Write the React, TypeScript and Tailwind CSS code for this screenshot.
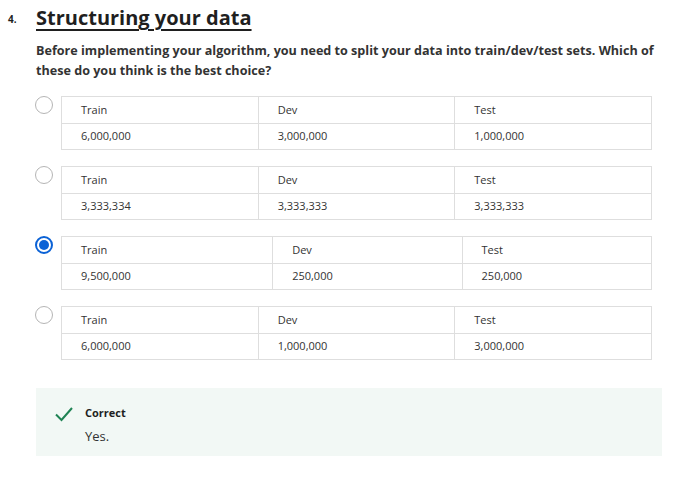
type Option = { train: string; dev: string; test: string; selected?: boolean };

const options: Option[] = [
  { train: '6,000,000', dev: '3,000,000', test: '1,000,000' },
  { train: '3,333,334', dev: '3,333,333', test: '3,333,333' },
  { train: '9,500,000', dev: '250,000', test: '250,000', selected: true },
  { train: '6,000,000', dev: '1,000,000', test: '3,000,000' },
];

function Radio({ selected }: { selected?: boolean }) {
  if (selected) {
    return (
      <div className="w-[18px] h-[18px] rounded-full border-2 border-[#0b62d6] flex items-center justify-center">
        <div className="w-[10px] h-[10px] rounded-full bg-[#0b62d6]" />
      </div>
    );
  }
  return <div className="w-[18px] h-[18px] rounded-full border border-[#b5b5b5] bg-white" />;
}

function SplitTable({ o }: { o: Option }) {
  const cell = 'border border-[#dedede] px-[19px] py-0 text-left font-normal align-middle';
  return (
    <table className="w-full border-collapse text-[11px] text-[#333]">
      <tbody>
        <tr>
          <td className={`${cell} h-[27px]`}>Train</td>
          <td className={`${cell} h-[27px]`}>Dev</td>
          <td className={`${cell} h-[27px]`}>Test</td>
        </tr>
        <tr>
          <td className={`${cell} h-[26px]`}>{o.train}</td>
          <td className={`${cell} h-[26px]`}>{o.dev}</td>
          <td className={`${cell} h-[26px]`}>{o.test}</td>
        </tr>
      </tbody>
    </table>
  );
}

export default function App() {
  return (
    <div
      className="w-[690px] h-[482px] bg-white pl-2 pr-[28px] pt-1"
      style={{ fontFamily: '"Open Sans", "Noto Sans", sans-serif' }}>
      <div className="flex">
        <div className="w-[28px] shrink-0 text-[10px] font-bold text-[#1f1f1f] leading-[28px] pt-[1px]">4.</div>
        <div className="flex-1">
          <h2 className="text-[20px] leading-[28px] font-bold text-[#1f1f1f] underline underline-offset-[4px] decoration-[1.5px]">
            Structuring your data
          </h2>
          <p className="mt-[9px] text-[12.6px] leading-[20px] font-bold text-[#333]">
            Before implementing your algorithm, you need to split your data into train/dev/test sets. Which of these
            do you think is the best choice?
          </p>

          <div className="mt-[15px] flex flex-col gap-[16px]">
            {options.map((o, i) => (
              <div key={i} className="flex items-start">
                <div className="w-[26px] shrink-0 -ml-[1px]">
                  <Radio selected={o.selected} />
                </div>
                <div className="flex-1 mr-[10px]">
                  <SplitTable o={o} />
                </div>
              </div>
            ))}
          </div>

          <div className="mt-[28px] bg-[#f2f8f5] h-[68px] pl-[19px] pt-[17px] flex gap-[12px]">
            <svg width="18" height="16" viewBox="0 0 18 16" className="shrink-0 mt-[1px]">
              <polyline points="1,8.5 6.5,14 17,2" fill="none" stroke="#1f8354" strokeWidth="2" />
            </svg>
            <div>
              <div className="text-[11px] font-bold text-[#1f1f1f] leading-[18px] -mt-[1px]">Correct</div>
              <div className="text-[13px] text-[#333] leading-[20px] mt-[4px]">Yes.</div>
            </div>
          </div>
        </div>
      </div>
    </div>
  );
}
